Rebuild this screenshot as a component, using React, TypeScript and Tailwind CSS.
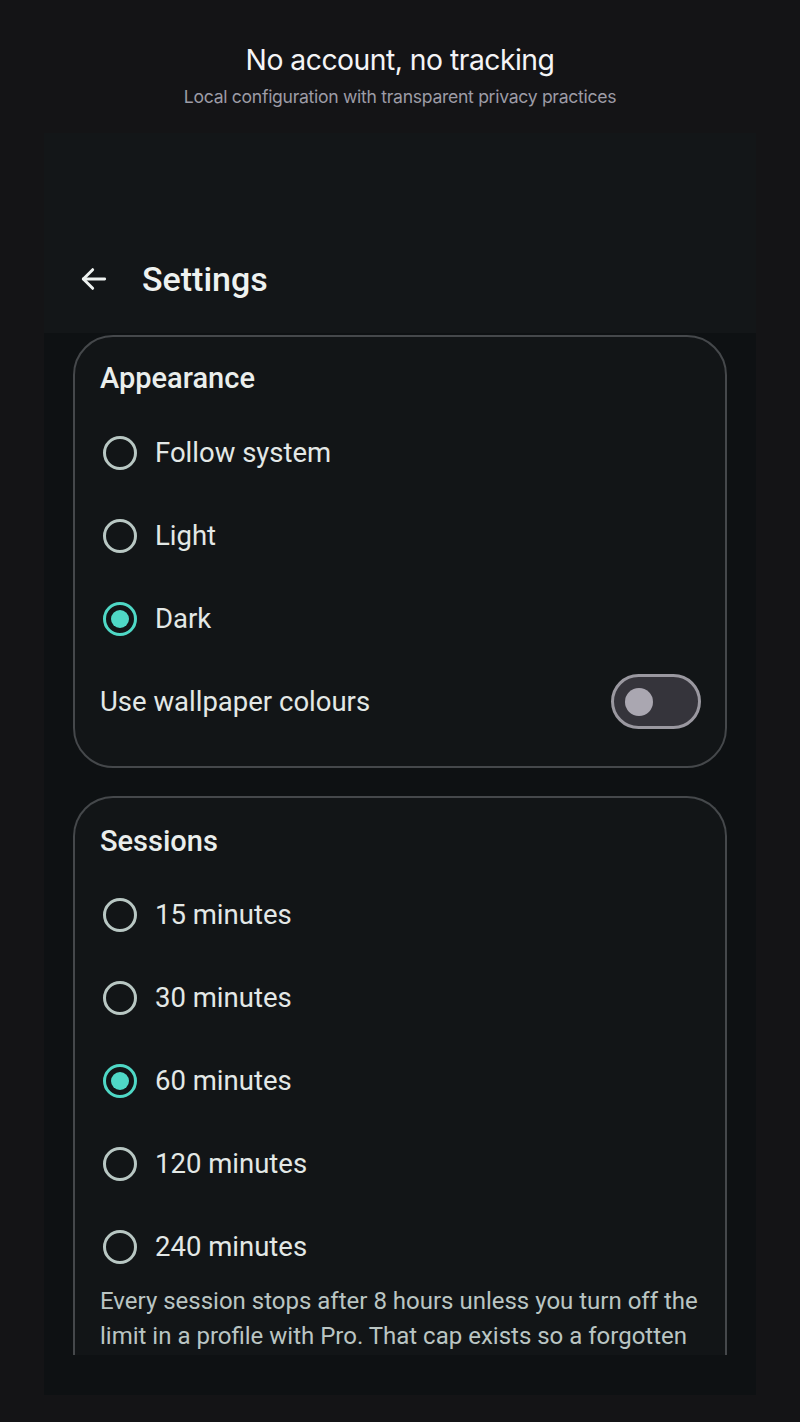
import React from 'react';

const appearance = ['Follow system', 'Light', 'Dark'];
const sessions = ['15 minutes', '30 minutes', '60 minutes', '120 minutes', '240 minutes'];

function Radio({ checked }: { checked: boolean }) {
    if (checked) {
        return (
            <span className="w-[34px] h-[34px] rounded-full border-[3px] border-[#4fd8c6] flex items-center justify-center shrink-0">
                <span className="w-[18px] h-[18px] rounded-full bg-[#4fd8c6]" />
            </span>
        );
    }
    return <span className="w-[34px] h-[34px] rounded-full border-[3px] border-[#b8c7c3] shrink-0" />;
}

function OptionRow({ label, checked }: { label: string; checked: boolean }) {
    return (
        <div className="h-[83px] flex items-center gap-[18px] pl-[2px]">
            <Radio checked={checked} />
            <span className="text-[27.5px] text-[#e3e8e6]">{label}</span>
        </div>
    );
}

export default function App() {
    return (
        <div className="w-[800px] h-[1422px] bg-[#141416] overflow-hidden" style={{ fontFamily: 'Roboto, "Noto Sans", sans-serif' }}>
            {/* Caption */}
            <div className="h-[133px] flex flex-col items-center pt-[40px]" style={{ fontFamily: 'Inter, "Noto Sans", sans-serif' }}>
                <div className="text-[28.3px] leading-[40px] text-[#f4f4f6] tracking-[-0.5px]">No account, no tracking</div>
                <div className="text-[17.6px] leading-[26px] text-[#9d9ca6] mt-[4px] tracking-[-0.3px]">Local configuration with transparent privacy practices</div>
            </div>

            {/* Phone */}
            <div className="mx-[44px] h-[1262px] bg-[#0e1113] flex flex-col">
                <div className="h-[200px] bg-[#131618] flex items-end pb-[34px] px-[34px]">
                    <div className="h-[40px] flex items-center gap-[32px]">
                        <svg width="32" height="32" viewBox="0 0 24 24" fill="none" stroke="#eef2f0" strokeWidth="2.2" strokeLinecap="round" strokeLinejoin="round">
                            <path d="M20 12H4" />
                            <path d="M11 5l-7 7 7 7" />
                        </svg>
                        <span className="text-[34px] font-medium text-[#eef2f0]">Settings</span>
                    </div>
                </div>

                <div className="h-[1022px] overflow-hidden px-[29px] pt-[2px] flex flex-col gap-[28px]">
                    <section className="rounded-[40px] border-2 border-[#45484b] bg-[#121517] px-[26px] pt-[20px] pb-[23px]">
                        <h2 className="h-[42px] leading-[42px] text-[29px] font-medium text-[#eaeeec] mb-[12px] ml-[-1px]">Appearance</h2>
                        {appearance.map((a) => (
                            <OptionRow key={a} label={a} checked={a === 'Dark'} />
                        ))}
                        <div className="h-[83px] flex items-center justify-between">
                            <span className="text-[27.5px] text-[#e3e8e6] ml-[-1px]">Use wallpaper colours</span>
                            <span className="w-[90px] h-[55px] rounded-full border-[3px] border-[#9a98a0] bg-[#35343b] flex items-center pl-[11px] mr-[-2px]">
                                <span className="w-[28px] h-[28px] rounded-full bg-[#aaa7b1]" />
                            </span>
                        </div>
                    </section>

                    <section className="rounded-t-[40px] border-2 border-b-0 border-[#45484b] bg-[#121517] px-[26px] pt-[22px]">
                        <h2 className="h-[42px] leading-[42px] text-[29px] font-medium text-[#eaeeec] mb-[11px] ml-[-1px]">Sessions</h2>
                        {sessions.map((s) => (
                            <OptionRow key={s} label={s} checked={s === '60 minutes'} />
                        ))}
                        <p className="text-[24px] leading-[35px] text-[#bac5c3] mt-[-4px] ml-[-1px] mr-[-4px]">
                            Every session stops after 8 hours unless you turn off the limit in a profile with Pro. That cap exists so a forgotten session doesn't keep running all night on your device.
                        </p>
                    </section>
                </div>
                <div className="h-[38px] bg-[#0e1113]" />
            </div>
        </div>
    );
}
